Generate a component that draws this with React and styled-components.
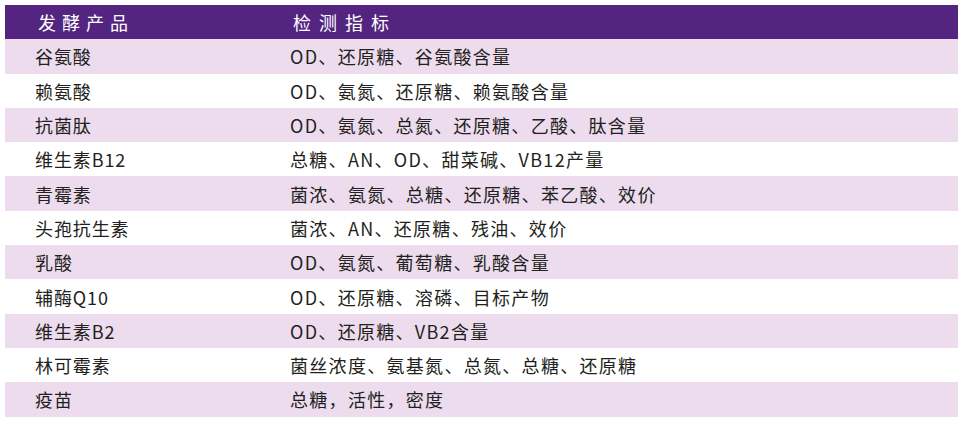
import React from "react";
import styled, { createGlobalStyle } from "styled-components";

const Global = createGlobalStyle`
  html, body { margin: 0; padding: 0; background: #ffffff; }
  body { font-family: "Noto Sans CJK SC", "Noto Sans", sans-serif; }
`;

const Page = styled.div`
  padding: 5px 6px 0 5px;
  width: 964px;
  box-sizing: border-box;
`;

const Table = styled.div`
  display: grid;
  grid-template-columns: 253px 1fr;
  grid-auto-rows: 34.3px;
  width: 953px;
`;

const Row = styled.div`
  display: contents;
`;

const Cell = styled.div`
  display: flex;
  align-items: center;
  padding-left: ${(p) => p.$pad}px;
  background: ${(p) => (p.$head ? "#532581" : p.$shade ? "#ecdcee" : "#ffffff")};
  color: ${(p) => (p.$head ? "#ffffff" : "#231f20")};
  font-size: 18px;
  letter-spacing: ${(p) => p.$ls}px;
  white-space: pre;
  line-height: 1;
`;

const rows = [
  ["谷氨酸", "OD、还原糖、谷氨酸含量"],
  ["赖氨酸", "OD、氨氮、还原糖、赖氨酸含量"],
  ["抗菌肽", "OD、氨氮、总氮、还原糖、乙酸、肽含量"],
  ["维生素B12", "总糖、AN、OD、甜菜碱、VB12产量"],
  ["青霉素", "菌浓、氨氮、总糖、还原糖、苯乙酸、效价"],
  ["头孢抗生素", "菌浓、AN、还原糖、残油、效价"],
  ["乳酸", "OD、氨氮、葡萄糖、乳酸含量"],
  ["辅酶Q10", "OD、还原糖、溶磷、目标产物"],
  ["维生素B2", "OD、还原糖、VB2含量"],
  ["林可霉素", "菌丝浓度、氨基氮、总氮、总糖、还原糖"],
  ["疫苗", "总糖，活性，密度"],
];

export default function App() {
  return (
    <Page>
      <Global />
      <Table>
        <Row>
          <Cell $head $pad={33} $ls={1}>发 酵 产 品</Cell>
          <Cell $head $pad={35} $ls={2}>检 测 指 标</Cell>
        </Row>
        {rows.map(([a, b], i) => (
          <Row key={a}>
            <Cell $pad={30} $ls={0.9} $shade={i % 2 === 0}>{a}</Cell>
            <Cell $pad={32} $ls={1.3} $shade={i % 2 === 0}>{b}</Cell>
          </Row>
        ))}
      </Table>
    </Page>
  );
}
